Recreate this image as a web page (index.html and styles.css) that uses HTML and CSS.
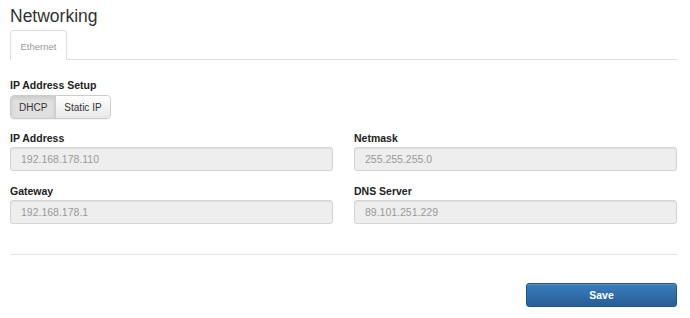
FILE: index.html
```html
<!DOCTYPE html>
<html>
<head>
<meta charset="utf-8">
<link rel="stylesheet" href="styles.css">
</head>
<body>
<div class="page">
  <h1 class="title">Networking</h1>
  <div class="tabs">
    <div class="tab active">Ethernet</div>
  </div>
  <div class="setup">
    <div class="label">IP Address Setup</div>
    <div class="btn-group">
      <span class="seg active">DHCP</span>
      <span class="seg">Static IP</span>
    </div>
  </div>
  <div class="fields">
    <div class="field">
      <div class="label">IP Address</div>
      <div class="input">192.168.178.110</div>
    </div>
    <div class="field">
      <div class="label">Netmask</div>
      <div class="input">255.255.255.0</div>
    </div>
    <div class="field">
      <div class="label">Gateway</div>
      <div class="input">192.168.178.1</div>
    </div>
    <div class="field">
      <div class="label">DNS Server</div>
      <div class="input">89.101.251.229</div>
    </div>
  </div>
  <div class="divider"></div>
  <div class="actions">
    <button class="save">Save</button>
  </div>
</div>
</body>
</html>
```

FILE: styles.css
```css
html, body {
  margin: 0;
  padding: 0;
  background: #fff;
}
body {
  font-family: "Liberation Sans", Arial, Helvetica, sans-serif;
  color: #333;
}
.page {
  padding: 0 13px 0 10px;
}
.title {
  margin: 0 0 4px 0;
  padding-top: 6px;
  font-size: 17.5px;
  line-height: 20px;
  font-weight: normal;
  color: #333;
}
.tabs {
  display: flex;
  height: 29px;
  border-bottom: 1px solid #ddd;
}
.tab {
  box-sizing: border-box;
  height: 30px;
  width: 57px;
  margin-bottom: -1px;
  border: 1px solid #ddd;
  border-bottom-color: #fff;
  border-radius: 4px 4px 0 0;
  background: #fff;
  color: #999;
  font-size: 9.5px;
  display: flex;
  align-items: center;
  justify-content: center;
  padding-top: 2px;
}
.setup {
  margin-top: 18px;
}
.label {
  font-size: 10.5px;
  line-height: 14px;
  font-weight: bold;
  color: #222;
}
.btn-group {
  display: inline-flex;
  margin-top: 3px;
  border: 1px solid #ccc;
  border-radius: 4px;
  overflow: hidden;
  height: 22px;
  box-shadow: 0 1px 1px rgba(0,0,0,0.05);
}
.seg {
  display: flex;
  align-items: center;
  padding: 0 8px;
  font-size: 10px;
  color: #333;
  background: linear-gradient(#fff, #e8e8e8);
}
.seg + .seg {
  border-left: 1px solid #ccc;
}
.seg.active {
  background: #e0e0e0;
  box-shadow: inset 0 2px 4px rgba(0,0,0,0.12);
}
.fields {
  margin-top: 12px;
  display: grid;
  grid-template-columns: 1fr 1fr;
  column-gap: 21px;
  row-gap: 13px;
}
.field .label {
  margin-bottom: 2px;
}
.input {
  box-sizing: border-box;
  height: 24px;
  border: 1px solid #d4d4d4;
  border-radius: 3px;
  background: #eee;
  box-shadow: inset 0 1px 1px rgba(0,0,0,0.06);
  color: #999;
  font-size: 10.5px;
  line-height: 22px;
  padding: 0 10px;
}
.divider {
  margin-top: 30px;
  border-top: 1px solid #e5e5e5;
}
.actions {
  display: flex;
  justify-content: flex-end;
  margin-top: 28px;
}
.save {
  width: 151px;
  height: 24px;
  border: 1px solid #245580;
  border-radius: 3px;
  background: linear-gradient(#3a7dbd, #275e96);
  color: #fff;
  font-family: "Liberation Sans", Arial, sans-serif;
  font-weight: bold;
  font-size: 10.5px;
  padding: 0;
  box-shadow: inset 0 1px 0 rgba(255,255,255,0.15), 0 1px 1px rgba(0,0,0,0.075);
}
```
